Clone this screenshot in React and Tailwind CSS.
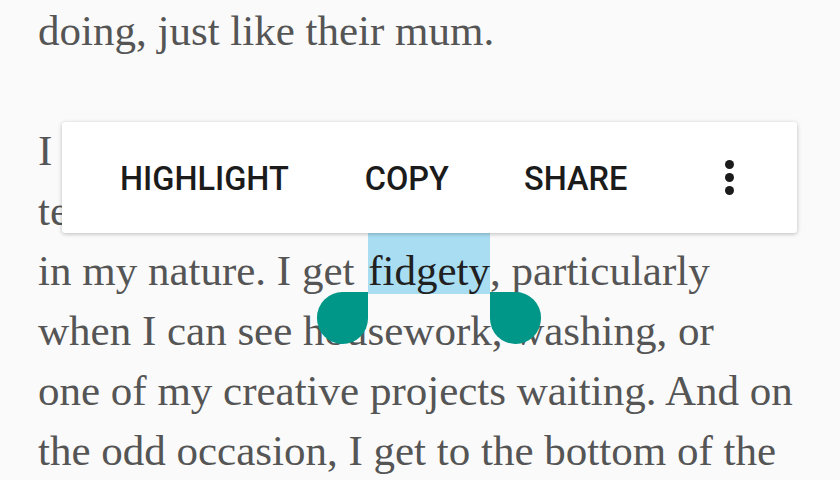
import React from 'react';

const lines = [
  'I am terrible at relaxing, though, and to',
  'tell the truth, to sit still at home isn’t',
];

export default function App() {
  return (
    <div className="relative w-[840px] h-[480px] overflow-hidden bg-[#fafafa]">
      <div className="mt-[1px] pl-[38px] text-[43px] leading-[60px] text-[#555555] whitespace-nowrap font-['Liberation_Serif',serif]">
        <p className="mb-[60px]">doing, just like their mum.</p>
        <p>
          {lines.map((l) => (
            <span key={l} className="block">{l}</span>
          ))}
          <span className="block">
            in my nature. I get{' '}
            <span className="relative ml-[3px] bg-[#a8ddf2] pt-[14px] text-[#202020]">
              fidgety
              <span className="absolute left-[-51px] top-[59px] w-[51px] h-[52px] rounded-full rounded-tr-none bg-[#009688]" />
              <span className="absolute right-[-51px] top-[59px] w-[51px] h-[52px] rounded-full rounded-tl-none bg-[#009688]" />
            </span>
            , particularly
          </span>
          <span className="block">when I can see housework, washing, or</span>
          <span className="block">one of my creative projects waiting. And on</span>
          <span className="block">the odd occasion, I get to the bottom of the</span>
        </p>
      </div>

      <div className="absolute left-[62px] top-[122px] w-[735px] h-[111px] rounded-[3px] bg-white shadow-[0_1px_4px_rgba(0,0,0,0.25)] flex items-center pl-[58px] pt-[4px] font-['Roboto',sans-serif] font-medium text-[32.5px] text-[#1b1b1b]">
        <span>HIGHLIGHT</span>
        <span className="ml-[76px]">COPY</span>
        <span className="ml-[75px]">SHARE</span>
        <span className="ml-[98px] -mt-[4px] flex flex-col gap-[4px]">
          <span className="w-[9px] h-[9px] rounded-full bg-[#1b1b1b]" />
          <span className="w-[9px] h-[9px] rounded-full bg-[#1b1b1b]" />
          <span className="w-[9px] h-[9px] rounded-full bg-[#1b1b1b]" />
        </span>
      </div>
    </div>
  );
}
